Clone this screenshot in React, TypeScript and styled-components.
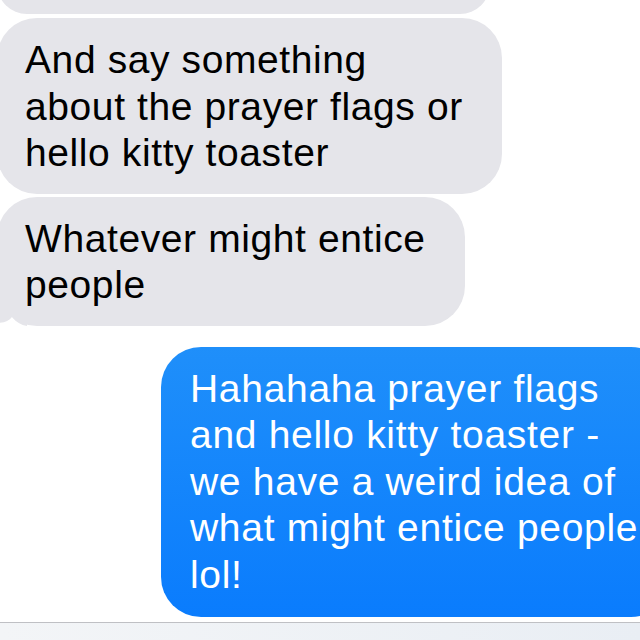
import styled, { createGlobalStyle } from 'styled-components';

const GlobalStyle = createGlobalStyle`
  html, body {
    margin: 0;
    padding: 0;
    background: #ffffff;
  }
  #root {
    width: 640px;
    height: 640px;
    overflow: hidden;
  }
`;

const Screen = styled.div`
  display: flex;
  flex-direction: column;
  width: 640px;
  height: 640px;
  overflow: hidden;
  background: #ffffff;
  font-family: 'Liberation Sans', Arial, sans-serif;
`;

const Thread = styled.div`
  flex: 1;
  display: flex;
  flex-direction: column;
  overflow: hidden;
`;

const Bubble = styled.div<{ $width: number; $gap: number }>`
  position: relative;
  box-sizing: border-box;
  flex-shrink: 0;
  width: ${(p) => p.$width}px;
  margin-left: -3px;
  margin-top: ${(p) => p.$gap}px;
  padding: 19px 0 17px 28px;
  border-radius: 40px;
  background: #e5e5ea;
  color: #000000;
  font-size: 39px;
  line-height: 46.5px;
  letter-spacing: 0.6px;
  white-space: nowrap;
`;

const ClippedBubble = styled(Bubble)`
  height: 60px;
  margin-top: -46px;
`;

const SentBubble = styled.div`
  box-sizing: border-box;
  flex-shrink: 0;
  align-self: flex-start;
  width: 510px;
  margin: 21px 0 0 161px;
  padding: 19px 0 19px 29px;
  border-radius: 40px;
  background: linear-gradient(#1f8ffa, #0a7cfd);
  color: #ffffff;
  font-size: 39px;
  line-height: 46.5px;
  letter-spacing: 0.7px;
  white-space: nowrap;
`;

const Tail = styled.svg`
  position: absolute;
  left: 0;
  bottom: 0;
  width: 30px;
  height: 30px;
`;

const Footer = styled.div`
  flex-shrink: 0;
  height: 17px;
  border-top: 1.5px solid #bfc0c4;
  background: linear-gradient(90deg, #f3f5f7, #e9eef4);
`;

export default function App() {
  return (
    <Screen>
      <GlobalStyle />
      <Thread>
        <ClippedBubble $width={493} $gap={0} />
        <Bubble $width={505} $gap={4}>
          And say something
          <br />
          about the prayer flags or
          <br />
          hello kitty toaster
        </Bubble>
        <Bubble $width={468} $gap={3}>
          Whatever might entice
          <br />
          people
          <Tail viewBox="0 0 30 30">
            <path d="M0 27 C 7 27 12 25 15 21 C 19 26 24 29 30 30 L 30 0 L 0 0 Z" fill="#e5e5ea" />
          </Tail>
        </Bubble>
        <SentBubble>
          Hahahaha prayer flags
          <br />
          and hello kitty toaster -
          <br />
          we have a weird idea of
          <br />
          what might entice people
          <br />
          lol!
        </SentBubble>
      </Thread>
      <Footer />
    </Screen>
  );
}
